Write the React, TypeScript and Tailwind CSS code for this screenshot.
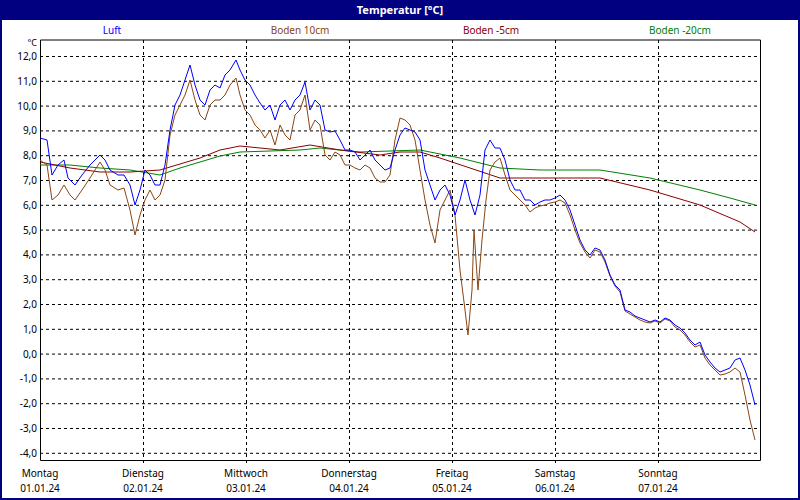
const yOf = (v: number) => 56 + (12 - v) * 24.8;

const luft = "40,138 47,140 52,175 58,165 64,160 68,178 75,185 82,175 90,165 100,155 105,160 110,170 118,175 124,175 130,185 135,205 140,190 145,170 150,175 155,185 160,185 165,165 170,130 175,105 180,95 185,80 190,65 195,85 200,100 205,105 210,90 215,85 220,88 225,75 230,70 236,60 240,70 245,80 250,85 255,95 260,103 265,110 270,105 275,120 280,105 285,100 290,110 295,100 300,95 305,82 310,110 315,100 320,105 325,130 330,132 335,131 340,140 345,150 350,150 355,152 360,160 365,155 370,150 375,160 380,165 385,170 390,168 395,150 400,135 405,128 410,130 415,132 420,140 425,170 430,185 435,200 440,190 445,185 450,195 455,215 460,200 465,180 470,200 475,215 480,195 485,150 490,140 495,148 500,148 505,160 510,180 515,190 520,190 525,200 530,200 535,205 540,202 545,200 550,200 555,198 560,195 565,200 570,210 575,225 580,240 585,250 590,255 595,248 600,250 605,260 610,275 615,285 620,290 625,310 630,312 635,316 640,318 645,320 650,322 655,320 660,322 665,318 670,320 675,325 680,328 685,333 690,340 695,345 700,342 705,355 710,362 715,368 720,372 725,370 730,368 735,360 740,358 745,370 750,385 755,405";

const boden10 = "40,160 47,165 52,200 58,195 64,185 70,195 75,200 82,190 90,178 100,162 105,170 110,185 118,190 124,188 130,210 135,235 140,215 145,200 150,190 155,200 160,195 165,180 170,135 175,115 180,105 185,95 190,80 195,100 200,115 205,120 210,105 215,100 220,100 225,95 230,85 236,78 240,95 245,110 250,115 255,125 260,130 265,138 270,130 275,145 280,125 285,135 290,140 295,115 300,110 305,95 310,130 315,120 320,125 325,155 330,160 335,152 340,155 345,165 350,165 355,168 360,170 365,165 370,168 375,178 380,182 385,182 390,175 395,140 400,118 405,120 410,125 415,140 420,170 425,200 430,225 435,243 440,210 445,200 450,190 455,215 460,270 465,310 468,335 472,290 474,230 478,290 482,240 486,200 490,170 495,162 500,158 505,175 510,190 515,195 520,200 525,205 530,212 535,208 540,206 545,205 550,203 555,202 560,200 565,203 570,215 575,230 580,243 585,252 590,258 595,250 600,252 605,262 610,276 615,286 620,292 625,311 630,314 635,317 640,320 645,322 650,323 655,321 660,323 665,319 670,321 675,327 680,330 685,335 690,342 695,347 700,345 705,358 710,365 715,370 720,375 725,374 730,372 735,368 740,372 745,395 750,420 755,440";

const boden5 = "40,162 70,168 100,172 130,172 160,170 180,164 200,158 220,150 240,146 260,148 280,150 310,145 340,150 380,155 400,152 420,152 440,158 470,168 500,178 540,178 600,178 650,190 700,205 740,222 755,232";
const boden20 = "40,165 70,165 100,168 130,170 160,175 180,168 200,162 220,156 240,152 270,151 300,150 320,148 360,152 420,150 460,158 500,168 540,170 600,170 650,178 700,190 730,198 755,205";

const days = [
  ["Montag", "01.01.24"], ["Dienstag", "02.01.24"], ["Mittwoch", "03.01.24"], ["Donnerstag", "04.01.24"],
  ["Freitag", "05.01.24"], ["Samstag", "06.01.24"], ["Sonntag", "07.01.24"],
];

export default function App() {
  const ticks = Array.from({ length: 17 }, (_, i) => 12 - i);
  return (
    <div className="w-[800px] h-[500px] bg-[#000080] flex flex-col font-['DejaVu_Sans',sans-serif]">
      <div className="h-[20px] flex items-center justify-center text-white text-[11px] font-bold">
        Temperatur [°C]
      </div>
      <div className="flex-1 mx-[2px] mb-[2px] bg-white relative">
        <svg width="796" height="478" className="block" style={{ fontSize: 10 }}>
          <g transform="translate(-2,-20)">
            <text x="112" y="34" fill="#0000ff" textAnchor="middle">Luft</text>
            <text x="300" y="34" fill="#8b4513" textAnchor="middle">Boden 10cm</text>
            <text x="491" y="34" fill="#8b0000" textAnchor="middle">Boden -5cm</text>
            <text x="680" y="34" fill="#008000" textAnchor="middle">Boden -20cm</text>
            <text x="37" y="46" textAnchor="end" fontSize="9">°C</text>
            {ticks.map((v) => (
              <g key={v}>
                <line x1="40" x2="760" y1={yOf(v) + 0.5} y2={yOf(v) + 0.5} stroke="#000" strokeDasharray="3 3" />
                <text x="37" y={yOf(v) + 4} textAnchor="end">{v.toFixed(1).replace(".", ",")}</text>
              </g>
            ))}
            {[1, 2, 3, 4, 5, 6].map((d) => (
              <line key={d} x1={40 + d * 103 + 0.5} x2={40 + d * 103 + 0.5} y1="40" y2="463" stroke="#000" strokeDasharray="3 3" />
            ))}
            <polyline points="40.5,40 40.5,460.5 760.5,460.5 760.5,40 40.5,40" fill="none" stroke="#000" />
            <polyline points={boden20} fill="none" stroke="#008000" />
            <polyline points={boden5} fill="none" stroke="#8b0000" />
            <polyline points={boden10} fill="none" stroke="#8b4513" />
            <polyline points={luft} fill="none" stroke="#0000ff" />
            {days.map(([n, dt], i) => (
              <g key={n}>
                <text x={40 + i * 103} y="477" textAnchor="middle">{n}</text>
                <text x={40 + i * 103} y="492" textAnchor="middle">{dt}</text>
              </g>
            ))}
          </g>
        </svg>
      </div>
    </div>
  );
}
